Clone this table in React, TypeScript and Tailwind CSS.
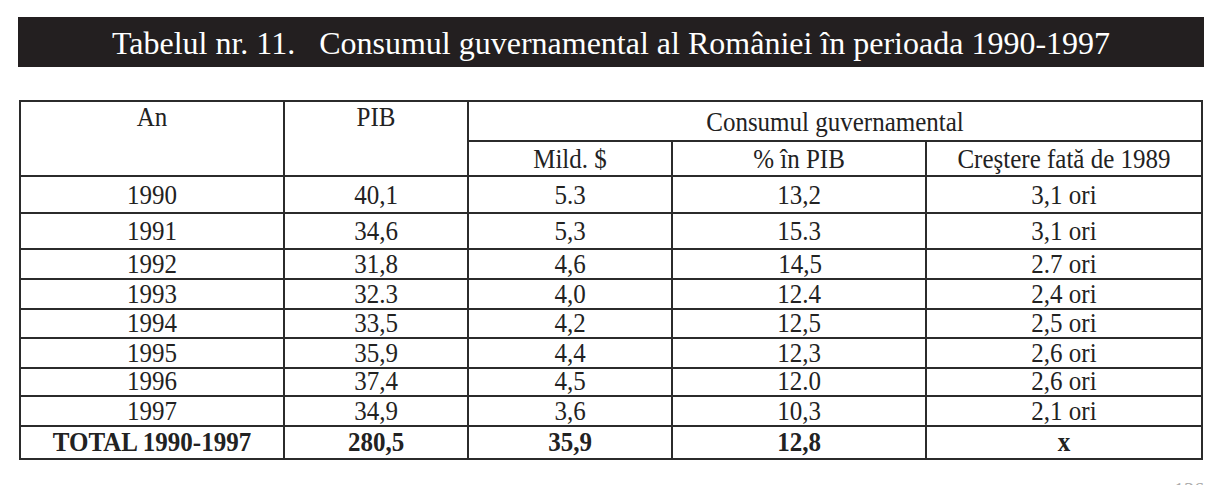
const rows: [string, string, string, string, string, string][] = [
  ["1990", "40,1", "5.3", "13,2", "3,1 ori", "h-[37px]"],
  ["1991", "34,6", "5,3", "15.3", "3,1 ori", "h-[36px]"],
  ["1992", "31,8", "4,6", "14,5", "2.7 ori", "h-[30px]"],
  ["1993", "32.3", "4,0", "12.4", "2,4 ori", "h-[29px]"],
  ["1994", "33,5", "4,2", "12,5", "2,5 ori", "h-[30px]"],
  ["1995", "35,9", "4,4", "12,3", "2,6 ori", "h-[28px]"],
  ["1996", "37,4", "4,5", "12.0", "2,6 ori", "h-[30px]"],
  ["1997", "34,9", "3,6", "10,3", "2,1 ori", "h-[28px]"],
];

const cols = "grid grid-cols-[264px_184px_204px_254px_276px]";
const cell = "flex items-center justify-center border-b-2 border-r-2 border-[#2b2b2b]";

// the scanned table text is a little taller than Liberation Serif
const T = ({ children }: { children: React.ReactNode }) => (
  <span className="inline-block scale-y-[1.1]">{children}</span>
);

export default function App() {
  return (
    <div className="min-h-screen bg-white pt-[17px] font-['Liberation_Serif',serif] text-[#222]">
      <div className="ml-[18px] flex h-[50px] w-[1186px] items-center justify-center bg-[#231f20] pt-[2px] text-[32px] text-white whitespace-pre">
        Tabelul nr. 11.   Consumul guvernamental al României în perioada 1990-1997
      </div>

      <div className="ml-[19px] mt-[33px] w-[1184px] border-l-2 border-t-2 border-[#2b2b2b] text-[25px] leading-[28px]">
        <div className={`${cols} grid-rows-[40px_35px]`}>
          <div className="row-span-2 border-b-2 border-r-2 border-[#2b2b2b] pt-[1px] text-center"><T>An</T></div>
          <div className="row-span-2 border-b-2 border-r-2 border-[#2b2b2b] pt-[1px] text-center"><T>PIB</T></div>
          <div className={`col-span-3 ${cell} pt-[2px]`}><T>Consumul guvernamental</T></div>
          <div className={cell}><T>Mild. $</T></div>
          <div className={cell}><T>% în PIB</T></div>
          <div className={cell}><T>Creştere fată de 1989</T></div>
        </div>

        {rows.map(([an, pib, mld, pct, cr, h]) => (
          <div key={an} className={`${cols} ${h}`}>
            <div className={cell}><T>{an}</T></div>
            <div className={cell}><T>{pib}</T></div>
            <div className={`${cell} ${an === "1992" ? "border-r-0" : ""}`}><T>{mld}</T></div>
            <div className={`${cell} ${an === "1992" ? "pl-[2px]" : ""}`}><T>{pct}</T></div>
            <div className={cell}><T>{cr}</T></div>
          </div>
        ))}

        <div className={`${cols} h-[35px] font-bold`}>
          <div className={cell}><T>TOTAL 1990-1997</T></div>
          <div className={cell}><T>280,5</T></div>
          <div className={cell}><T>35,9</T></div>
          <div className={cell}><T>12,8</T></div>
          <div className={cell}><T>x</T></div>
        </div>
      </div>

      <div className="mt-[20px] w-[1204px] text-right text-[20px] leading-none text-[#aaa]">136</div>
    </div>
  );
}
